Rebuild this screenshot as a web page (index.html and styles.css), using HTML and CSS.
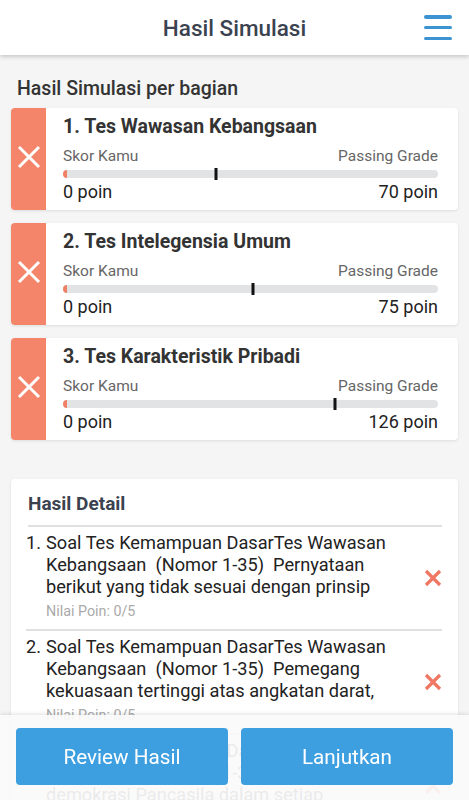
FILE: index.html
```html
<!DOCTYPE html>
<html lang="id">

    <head>
        <meta charset="UTF-8">
        <meta name="viewport" content="width=device-width, initial-scale=1.0">
        <title>Hasil Simulasi</title>
        <link rel="stylesheet" href="styles.css">
    </head>

    <body>
        <header class="topbar">
            <h1>Hasil Simulasi</h1>
            <button class="menu-btn" aria-label="Menu">
                <span></span><span></span><span></span>
            </button>
        </header>

        <main class="content">
            <h2 class="section-title">Hasil Simulasi per bagian</h2>

            <div class="part-card">
                <div class="part-status">
                    <svg width="24" height="24" viewBox="0 0 24 24"><path d="M2 2 L22 22 M22 2 L2 22" stroke="#fff" stroke-width="3" fill="none"/></svg>
                </div>
                <div class="part-body">
                    <h3>1. Tes Wawasan Kebangsaan</h3>
                    <div class="row labels"><span>Skor Kamu</span><span>Passing Grade</span></div>
                    <div class="bar">
                        <div class="bar-fill"></div>
                        <div class="bar-mark" style="left: 40.7%;"></div>
                    </div>
                    <div class="row values"><span>0 poin</span><span>70 poin</span></div>
                </div>
            </div>

            <div class="part-card">
                <div class="part-status">
                    <svg width="24" height="24" viewBox="0 0 24 24"><path d="M2 2 L22 22 M22 2 L2 22" stroke="#fff" stroke-width="3" fill="none"/></svg>
                </div>
                <div class="part-body">
                    <h3>2. Tes Intelegensia Umum</h3>
                    <div class="row labels"><span>Skor Kamu</span><span>Passing Grade</span></div>
                    <div class="bar">
                        <div class="bar-fill"></div>
                        <div class="bar-mark" style="left: 50.7%;"></div>
                    </div>
                    <div class="row values"><span>0 poin</span><span>75 poin</span></div>
                </div>
            </div>

            <div class="part-card">
                <div class="part-status">
                    <svg width="24" height="24" viewBox="0 0 24 24"><path d="M2 2 L22 22 M22 2 L2 22" stroke="#fff" stroke-width="3" fill="none"/></svg>
                </div>
                <div class="part-body">
                    <h3>3. Tes Karakteristik Pribadi</h3>
                    <div class="row labels"><span>Skor Kamu</span><span>Passing Grade</span></div>
                    <div class="bar">
                        <div class="bar-fill"></div>
                        <div class="bar-mark" style="left: 72.4%;"></div>
                    </div>
                    <div class="row values"><span>0 poin</span><span>126 poin</span></div>
                </div>
            </div>

            <section class="detail-card">
                <h2>Hasil Detail</h2>

                <div class="detail-item">
                    <span class="num">1.</span>
                    <div class="detail-text">
                        <p>Soal Tes Kemampuan DasarTes Wawasan Kebangsaan&nbsp; (Nomor 1-35)&nbsp; Pernyataan berikut yang tidak sesuai dengan prinsip</p>
                        <small>Nilai Poin: 0/5</small>
                    </div>
                    <svg class="wrong" width="18" height="18" viewBox="0 0 18 18"><path d="M2 2 L16 16 M16 2 L2 16" stroke="#ef7764" stroke-width="3.2" fill="none"/></svg>
                </div>

                <div class="detail-item">
                    <span class="num">2.</span>
                    <div class="detail-text">
                        <p>Soal Tes Kemampuan DasarTes Wawasan Kebangsaan&nbsp; (Nomor 1-35)&nbsp; Pemegang kekuasaan tertinggi atas angkatan darat,</p>
                        <small>Nilai Poin: 0/5</small>
                    </div>
                    <svg class="wrong" width="18" height="18" viewBox="0 0 18 18"><path d="M2 2 L16 16 M16 2 L2 16" stroke="#ef7764" stroke-width="3.2" fill="none"/></svg>
                </div>

                <div class="detail-item">
                    <span class="num">3.</span>
                    <div class="detail-text">
                        <p>Soal Tes Kemampuan DasarTes Wawasan Kebangsaan&nbsp; (Nomor 1-35)&nbsp; Pelaksanaan demokrasi Pancasila dalam setiap</p>
                        <small>Nilai Poin: 0/5</small>
                    </div>
                    <svg class="wrong" width="18" height="18" viewBox="0 0 18 18"><path d="M2 2 L16 16 M16 2 L2 16" stroke="#ef7764" stroke-width="3.2" fill="none"/></svg>
                </div>
            </section>
        </main>

        <footer class="action-bar">
            <button class="btn">Review Hasil</button>
            <button class="btn">Lanjutkan</button>
        </footer>
    </body>

</html>
```

FILE: styles.css
```css
body {
    margin: 0;
    font-family: Roboto, "Liberation Sans", sans-serif;
    background-color: #f5f5f5;
    color: #222;
}

.topbar {
    height: 55px;
    background: #fff;
    box-shadow: 0 2px 4px rgba(0, 0, 0, 0.18);
    display: flex;
    align-items: center;
    justify-content: center;
    position: relative;
}

.topbar h1 {
    margin: 0;
    font-size: 22.5px;
    font-weight: 500;
    color: #3b4250;
}

.menu-btn {
    position: absolute;
    right: 17px;
    top: 15px;
    width: 28px;
    height: 25px;
    padding: 0;
    border: none;
    background: none;
    display: flex;
    flex-direction: column;
    justify-content: space-between;
}

.menu-btn span {
    display: block;
    height: 3.5px;
    border-radius: 2px;
    background: #3b93d2;
}

.content {
    padding: 23px 11px 0;
}

.section-title {
    margin: 0 0 8px 6px;
    font-size: 19.5px;
    font-weight: 500;
    color: #333;
    line-height: 22px;
}

.part-card {
    display: flex;
    background: #fff;
    border-radius: 4px;
    box-shadow: 0 1px 3px rgba(0, 0, 0, 0.1);
    margin-bottom: 13px;
    overflow: hidden;
}

.part-status {
    width: 35px;
    flex: none;
    background: #f4846a;
    display: flex;
    align-items: center;
    justify-content: center;
    padding-bottom: 4px;
    box-sizing: border-box;
}

.part-body {
    flex: 1;
    padding: 8px 20px 7px 17px;
}

.part-body h3 {
    margin: 0;
    font-size: 19.5px;
    line-height: 22px;
    font-weight: 700;
    color: #333;
}

.row {
    display: flex;
    justify-content: space-between;
}

.labels {
    margin-top: 9px;
    font-size: 15.5px;
    line-height: 18px;
    color: #666;
}

.values {
    margin-top: 3px;
    font-size: 18px;
    line-height: 22px;
    color: #222;
}

.bar {
    position: relative;
    margin-top: 5px;
    height: 8px;
    border-radius: 4px;
    background: #e1e3e4;
}

.bar-fill {
    width: 4px;
    height: 100%;
    border-radius: 4px 0 0 4px;
    background: #f08065;
}

.bar-mark {
    position: absolute;
    top: -2px;
    width: 3px;
    height: 12px;
    background: #111;
    transform: translateX(-50%);
}

.detail-card {
    margin-top: 39px;
    background: #fff;
    border-radius: 4px;
    box-shadow: 0 1px 3px rgba(0, 0, 0, 0.1);
    padding: 14px 16px 90px 15px;
}

.detail-card h2 {
    margin: 0 0 0 2px;
    font-size: 19px;
    font-weight: 700;
    line-height: 22px;
    color: #3b4250;
    padding-bottom: 10px;
    border-bottom: 2px solid #e0e0e0;
}

.detail-item {
    display: flex;
    align-items: center;
    padding: 5px 0 10px;
    border-bottom: 2px solid #e0e0e0;
}

.detail-item .num {
    align-self: flex-start;
    width: 20px;
    flex: none;
    font-size: 18.2px;
    line-height: 22px;
}

.detail-text {
    flex: 1;
}

.detail-text p {
    margin: 0;
    font-size: 18.2px;
    line-height: 22px;
    color: #222;
    padding-right: 30px;
}

.detail-text small {
    display: block;
    margin-top: 5px;
    font-size: 14.3px;
    line-height: 16px;
    color: #aaa;
}

.wrong {
    flex: none;
    margin-top: 4px;
}

.action-bar {
    position: fixed;
    left: 0;
    right: 0;
    bottom: 0;
    height: 85px;
    box-sizing: border-box;
    padding: 13px 16px 15px;
    display: grid;
    grid-template-columns: 1fr 1fr;
    gap: 13px;
    background: rgba(250, 250, 250, 0.93);
    box-shadow: 0 -1px 4px rgba(0, 0, 0, 0.12);
}

.btn {
    border: none;
    border-radius: 4px;
    background: #3d9ee0;
    color: #fff;
    font-family: Roboto, "Liberation Sans", sans-serif;
    font-size: 20.7px;
}
```
